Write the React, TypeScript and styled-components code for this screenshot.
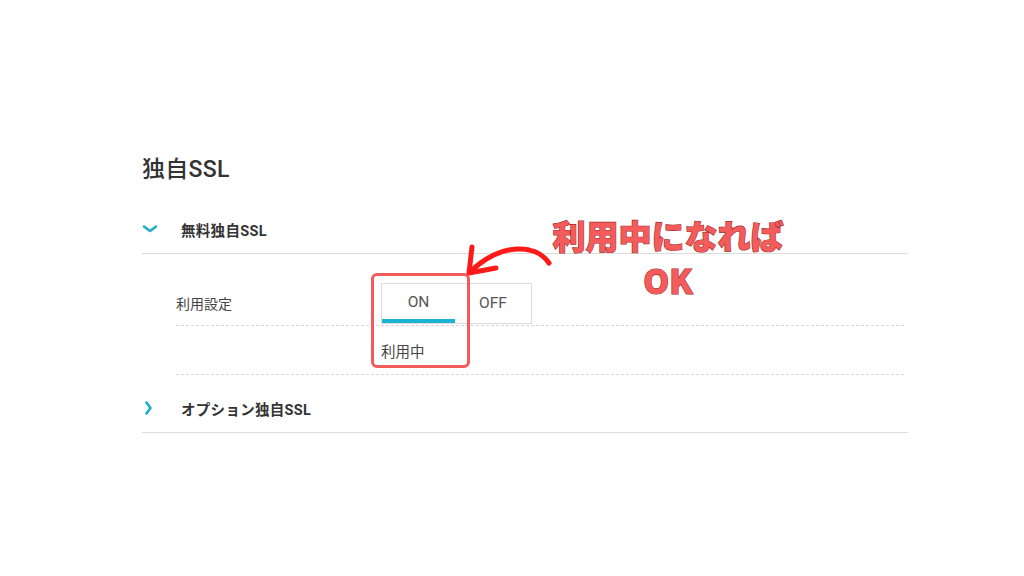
import React from 'react'
import styled, { createGlobalStyle } from 'styled-components'

const GlobalStyle = createGlobalStyle`
body{
    margin: 0;
    background: #ffffff;
    font-family: Roboto, "Noto Sans CJK JP", sans-serif;
    color: #333;
}
`

const Page = styled.div`
width: 1024px;
height: 576px;
box-sizing: border-box;
padding: 154px 116px 0 142px;
position: relative;
overflow: hidden;
`

const Title = styled.h2`
margin: 0;
font-size: 23px;
font-weight: 500;
line-height: 32px;
color: #333;
letter-spacing: 0.3px;
`

const SectionHeader = styled.div<{ $gap?: number }>`
display: flex;
align-items: center;
height: 48px;
margin-top: ${p => p.$gap ?? 0}px;
border-bottom: 1px solid #dcdcdc;
>span{
    font-size: 14.5px;
    font-weight: 700;
    color: #333;
    letter-spacing: 0.3px;
}
`

const ChevronBox = styled.div`
width: 39px;
display: flex;
align-items: center;
`

const Rows = styled.div`
padding: 0 4px 0 34px;
`

const Row = styled.div<{ $height: number; $top?: number }>`
display: flex;
align-items: center;
height: ${p => p.$height}px;
padding-top: ${p => p.$top ?? 0}px;
box-sizing: border-box;
border-bottom: 1px dashed #d6d6d6;
font-size: 14px;
color: #444;
`

const Label = styled.div`
width: 205px;
`

const Cell = styled.div`
position: relative;
`

const Toggle = styled.div`
display: flex;
border: 1px solid #dddddd;
height: 41px;
box-sizing: border-box;
`

const ToggleButton = styled.div<{ $active?: boolean; $width: number }>`
width: ${p => p.$width}px;
display: flex;
align-items: center;
justify-content: center;
font-size: 15.5px;
color: #555;
box-sizing: border-box;
padding-top: ${p => (p.$active ? 1 : 0)}px;
border-bottom: ${p => (p.$active ? '4px solid #1cb4d4' : 'none')};
background: #fff;
`

const Highlight = styled.div`
position: absolute;
left: -10px;
top: -10px;
width: 99px;
height: 95px;
box-sizing: border-box;
border: 3px solid #f25b5b;
border-radius: 6px;
pointer-events: none;
`

const Status = styled.div`
font-size: 14.5px;
color: #444;
`

const Note = styled.div`
position: absolute;
left: 551px;
top: 213px;
width: 234px;
text-align: center;
font-family: "Noto Sans CJK JP", sans-serif;
font-weight: 900;
font-size: 33px;
line-height: 45px;
color: #f45b5b;
-webkit-text-stroke: 1.2px #9e2a2a;
paint-order: stroke fill;
`

const Arrow = styled.svg`
position: absolute;
left: 0;
top: 0;
pointer-events: none;
`

const ChevronDown = () => (
    <svg width="16" height="10" viewBox="0 0 16 10">
        <path d="M2 2.5 L8 7 L14 2.5" fill="none" stroke="#1eaecb" strokeWidth="2.6" strokeLinecap="round" strokeLinejoin="round" />
    </svg>
)

const ChevronRight = () => (
    <svg width="16" height="14" viewBox="0 0 16 14">
        <path d="M4.5 1.5 L8.5 7 L4.5 12.5" fill="none" stroke="#1eaecb" strokeWidth="2.6" strokeLinecap="round" strokeLinejoin="round" />
    </svg>
)

export default function App() {
    return (
        <>
            <GlobalStyle />
            <Page>
                <Title>独自SSL</Title>
                <SectionHeader $gap={19}>
                    <ChevronBox><ChevronDown /></ChevronBox>
                    <span>無料独自SSL</span>
                </SectionHeader>
                <Rows>
                    <Row $height={72} $top={27}>
                        <Label>利用設定</Label>
                        <Cell>
                            <Toggle>
                                <ToggleButton $active $width={73}>ON</ToggleButton>
                                <ToggleButton $width={76}>OFF</ToggleButton>
                            </Toggle>
                            <Highlight />
                        </Cell>
                    </Row>
                    <Row $height={49}>
                        <Label></Label>
                        <Status>利用中</Status>
                    </Row>
                </Rows>
                <SectionHeader $gap={9}>
                    <ChevronBox><ChevronRight /></ChevronBox>
                    <span>オプション独自SSL</span>
                </SectionHeader>

                <Note>利用中になれば<br />OK</Note>
                <Arrow width="1024" height="576" viewBox="0 0 1024 576">
                    <path d="M549 263 C 536 244, 502 242, 471 271" fill="none" stroke="#ff1a1a" strokeWidth="5" strokeLinecap="round" />
                    <path d="M472 247 L469 273 L496 268" fill="none" stroke="#ff1a1a" strokeWidth="5" strokeLinecap="round" strokeLinejoin="round" />
                </Arrow>
            </Page>
        </>
    )
}
